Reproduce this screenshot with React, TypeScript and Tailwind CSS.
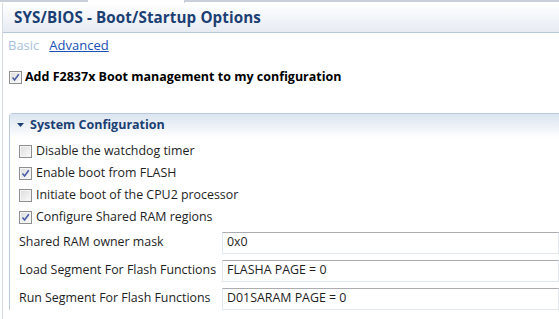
import React from 'react'

function Check({ checked }: { checked?: boolean }) {
  return (
    <span className="w-[13px] h-[13px] border border-[#8e8f8f] bg-gradient-to-br from-[#dcdcdc] to-[#fbfbfb] flex items-center justify-center shrink-0">
      <span className="w-[11px] h-[11px] border border-[#f4f4f4] flex items-center justify-center">
        {checked && (
          <svg width="9" height="9" viewBox="0 0 9 9">
            <path d="M1.5 4.5 L3.6 7 L7.8 1.2" fill="none" stroke="#4a5fa8" strokeWidth="1.6" />
          </svg>
        )}
      </span>
    </span>
  )
}

function Row({ label, value }: { label: string; value: string }) {
  return (
    <div className="flex items-center h-[22px]">
      <span className="w-[203px] shrink-0">{label}</span>
      <div className="flex-1 h-[22px] border border-[#e2e8ee] border-t-[#abadb3] flex items-center pl-[4px] bg-white">{value}</div>
    </div>
  )
}

function App() {
  return (
    <div className="w-[559px] h-[319px] overflow-hidden bg-white text-[12.4px] text-[#1e1e1e]" style={{ fontFamily: '"Open Sans", "Noto Sans", sans-serif' }}>
      {/* tab strip */}
      <div className="h-[3px] flex">
        <div className="w-[88px] border-t-2 border-[#c9cfda]" />
        <div className="w-[97px] border-r border-[#c9cfda]" />
        <div className="flex-1 border-t-2 border-[#c9cfda]" />
      </div>
      <div className="ml-[2px] border-l border-[#d5dbe3] h-[316px]">
        <div className="h-[30px] bg-gradient-to-b from-[#ffffff] to-[#e6ebf3] border-b border-[#b7c9d9] flex items-center pl-[11px]">
          <span className="text-[15.2px] font-bold text-[#1b3f73] tracking-[0.1px]">SYS/BIOS - Boot/Startup Options</span>
        </div>
        <div className="flex gap-[10px] pl-[5px] mt-[3px] h-[20px] items-center text-[13px]">
          <span className="text-[#a8c1dc]">Basic</span>
          <span className="text-[#1a4fb5] underline">Advanced</span>
        </div>
        <div className="flex items-center gap-[3px] pl-[6px] mt-[12px]">
          <Check checked />
          <span className="font-bold text-[12.5px] text-black">Add F2837x Boot management to my configuration</span>
        </div>
        <div className="ml-[6px] mt-[26px] border-l border-t border-[#b8cadb] rounded-tl-[4px]">
          <div className="h-[24px] bg-gradient-to-b from-[#dbe4ef] to-[#ffffff] flex items-center pl-[7px] gap-[6px]">
            <svg width="7" height="5" viewBox="0 0 7 5"><path d="M0 0 H7 L3.5 4 Z" fill="#1b3f73" /></svg>
            <span className="font-bold text-[12.5px] text-[#1b3f73]">System Configuration</span>
          </div>
          <div className="pl-[9px] pt-[3px] flex flex-col">
            <label className="flex items-center gap-[4px] h-[22px]"><Check /><span>Disable the watchdog timer</span></label>
            <label className="flex items-center gap-[4px] h-[22px]"><Check checked /><span>Enable boot from FLASH</span></label>
            <label className="flex items-center gap-[4px] h-[22px]"><Check /><span>Initiate boot of the CPU2 processor</span></label>
            <label className="flex items-center gap-[4px] h-[22px]"><Check checked /><span>Configure Shared RAM regions</span></label>
            <div className="flex flex-col gap-[6px] mt-[3px]">
              <Row label="Shared RAM owner mask" value="0x0" />
              <Row label="Load Segment For Flash Functions" value="FLASHA PAGE = 0" />
              <Row label="Run Segment For Flash Functions" value="D01SARAM PAGE = 0" />
            </div>
          </div>
        </div>
      </div>
    </div>
  )
}

export default App
